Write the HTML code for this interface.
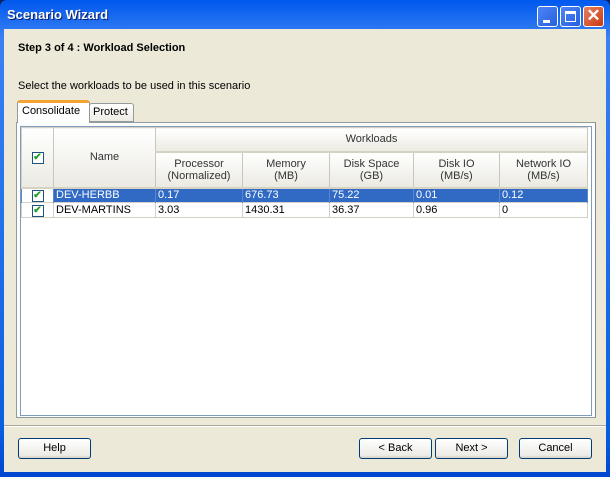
<!DOCTYPE html>
<html><head><style>
*{box-sizing:border-box}
body{margin:0;width:610px;height:477px;overflow:hidden;font-family:"Liberation Sans",sans-serif;font-size:11px;background:#0A246A}
.win{position:absolute;left:0;top:0;width:610px;height:477px;background:linear-gradient(#0058EE,#3A81F3 8%,#0A5FE0 90%,#0047CF);border-radius:7px 7px 0 0}
.title{position:absolute;left:7px;top:7px;color:#fff;font-weight:bold;font-size:13px;text-shadow:1px 1px #0A1E6A}
.client{position:absolute;left:4px;top:29px;width:602px;height:443px;background:#ECE9D8}
.tb{position:absolute;top:6px;width:21px;height:21px;border:1px solid #fff;border-radius:3px;background:linear-gradient(135deg,#4E84F4,#2660E0)}
.abs{position:absolute}
.btn{position:absolute;top:409px;height:21px;width:73px;border:1px solid #003C74;border-radius:3px;background:linear-gradient(#fff,#ECEBE6 85%,#D6D0C5);text-align:center;line-height:19px;font-size:11px}
table{border-collapse:collapse;position:absolute;left:17px;top:98px;font-size:11px}
td{border:1px solid #D4D0C8;padding:0 2px;height:15px;white-space:nowrap}
th{font-weight:normal;color:#333;background:linear-gradient(#fff,#EBEAE2);border:1px solid #D4D0C8;border-right:1px solid #C9C6BB;border-bottom:2px solid #D6D2C2;text-align:center;line-height:12px}
.cb{display:inline-block;width:12px;height:12px;border:1px solid #1C5180;background:#fff;color:#21A121;font-size:10px;line-height:10px;text-align:center;font-weight:bold}
.sel td{background:#316AC5;color:#fff;border-color:#5C86CC;border-top:1px dotted #000;border-bottom:1px dotted #000}
</style></head><body>
<div class="win">
<div class="title">Scenario Wizard</div>
<div class="tb" style="left:537px"><div class="abs" style="left:5px;top:13px;width:7px;height:3px;background:#fff"></div></div>
<div class="tb" style="left:560px"><div class="abs" style="left:4px;top:4px;width:11px;height:11px;border:1px solid #fff;border-top-width:3px"></div></div>
<div class="tb" style="left:583px;background:linear-gradient(135deg,#E9805F,#C93A13);color:#fff;font-size:17px;line-height:18px;text-align:center;font-weight:bold">✕</div>
<div class="client">
<div class="abs" style="left:14px;top:13px;font-weight:bold;font-size:11px">Step 3 of 4 : Workload Selection</div>
<div class="abs" style="left:14px;top:51px">Select the workloads to be used in this scenario</div>
<div class="abs" style="left:13px;top:71px;width:73px;height:23px;background:#fff;border:1px solid #919B9C;border-top:3px solid #F4A234;border-bottom:none;border-radius:3px 3px 0 0;padding:2px 4px;z-index:2">Consolidate</div>
<div class="abs" style="left:85px;top:74px;width:45px;height:19px;background:linear-gradient(#fff,#ECEBE5);border:1px solid #919B9C;border-radius:3px 3px 0 0;padding:2px 3px">Protect</div>
<div class="abs" style="left:12px;top:93px;width:580px;height:296px;background:#FCFCFE;border:1px solid #919B9C;border-right-color:#7A8A99"></div>
<div class="abs" style="left:16px;top:97px;width:572px;height:290px;background:#fff;border:1px solid #7F9DB9"></div>
<table>
<tr style="height:24px"><th rowspan="2" style="width:32px"><span class="cb">✔</span></th><th rowspan="2" style="width:102px">Name</th><th colspan="5">Workloads</th></tr>
<tr style="height:36px"><th style="width:87px">Processor<br>(Normalized)</th><th style="width:87px">Memory<br>(MB)</th><th style="width:84px">Disk Space<br>(GB)</th><th style="width:86px">Disk IO<br>(MB/s)</th><th style="width:88px">Network IO<br>(MB/s)</th></tr>
<tr class="sel"><td style="text-align:center;background:#fff"><span class="cb">✔</span></td><td>DEV-HERBB</td><td>0.17</td><td>676.73</td><td>75.22</td><td>0.01</td><td>0.12</td></tr>
<tr><td style="text-align:center"><span class="cb">✔</span></td><td>DEV-MARTINS</td><td>3.03</td><td>1430.31</td><td>36.37</td><td>0.96</td><td>0</td></tr>
</table>
<div class="abs" style="left:0;top:396px;width:602px;height:1px;background:#ACA899"></div>
<div class="abs" style="left:0;top:397px;width:602px;height:1px;background:#fff"></div>
<div class="btn" style="left:14px">Help</div>
<div class="btn" style="left:355px">&lt; Back</div>
<div class="btn" style="left:431px">Next &gt;</div>
<div class="btn" style="left:515px">Cancel</div>
</div></div>
</body></html>
